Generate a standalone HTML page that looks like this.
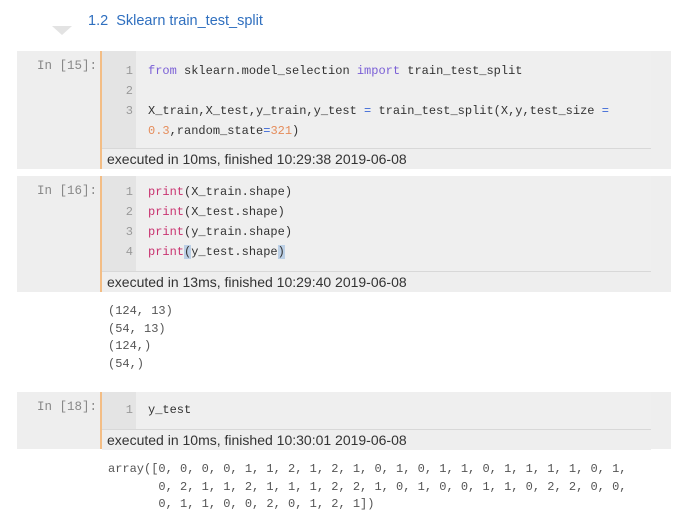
<!DOCTYPE html><html><head><style>
body{margin:0;width:687px;height:528px;background:#fff;position:relative;overflow:hidden;font-family:"Liberation Sans",sans-serif}
.a{position:absolute}
.cell{position:absolute;left:17px;width:654px;background:#eeeeee}
.pr{position:absolute;left:0;width:80px;text-align:right;font:12.5px "Liberation Mono",monospace;color:#888}
.ob{position:absolute;left:83px;width:2px;top:0;bottom:0;background:#f3bd85}
.gut{position:absolute;left:85px;width:34px;background:#e4e4e4;top:0}
.code{position:absolute;left:119px;right:20px;top:0;background:#efefef}
.ln{position:absolute;font:12px "Liberation Mono",monospace;color:#999;width:30px;text-align:right}
.cl{position:absolute;left:131px;font:12px "Liberation Mono",monospace;color:#333;white-space:pre}
.ex{position:absolute;left:85px;right:20px;border-top:1px solid #d8d8d8;height:20px;font-size:14px;color:#333;padding-left:5px;line-height:20px;background:#eeeeee}
.kw{color:#7a5fd6}.bi{color:#c93370}.nm{color:#e58c5a}.op{color:#3a66d6}
.out{position:absolute;left:108px;font:12px "Liberation Mono",monospace;color:#555;white-space:pre;line-height:17.5px}
</style></head><body>
<div class="a" style="left:52px;top:26px;width:0;height:0;border-left:10px solid transparent;border-right:10px solid transparent;border-top:9px solid #e3e3e3"></div>
<div class="a" style="left:88px;top:13px;font-size:14.5px;color:#2f6fbf">1.2&nbsp; Sklearn train_test_split</div>

<div class="cell" style="top:51px;height:118px">
<div class="pr" style="top:8px">In [15]:</div>
<div class="ob"></div>
<div class="gut" style="height:97px"></div><div class="code" style="height:97px"></div>
<div class="ln" style="left:86px;top:13px">1</div><div class="ln" style="left:86px;top:33px">2</div><div class="ln" style="left:86px;top:53px">3</div>
<div class="cl" style="top:13px"><span class="kw">from</span> sklearn.model_selection <span class="kw">import</span> train_test_split</div>
<div class="cl" style="top:53px">X_train,X_test,y_train,y_test <span class="op">=</span> train_test_split(X,y,test_size <span class="op">=</span></div>
<div class="cl" style="top:73px"><span class="nm">0.3</span>,random_state<span class="op">=</span><span class="nm">321</span>)</div>
<div class="ex" style="top:97px">executed in 10ms, finished 10:29:38 2019-06-08</div>
</div>

<div class="cell" style="top:176px;height:116px">
<div class="pr" style="top:8px">In [16]:</div>
<div class="ob"></div>
<div class="gut" style="height:95px"></div><div class="code" style="height:95px"></div>
<div class="ln" style="left:86px;top:9px">1</div><div class="ln" style="left:86px;top:29px">2</div><div class="ln" style="left:86px;top:49px">3</div><div class="ln" style="left:86px;top:69px">4</div>
<div class="cl" style="top:9px"><span class="bi">print</span>(X_train.shape)</div>
<div class="cl" style="top:29px"><span class="bi">print</span>(X_test.shape)</div>
<div class="cl" style="top:49px"><span class="bi">print</span>(y_train.shape)</div>
<div class="cl" style="top:69px"><span class="bi">print</span><span style="background:#bcd0e6">(</span>y_test.shape<span style="background:#bcd0e6">)</span></div>
<div class="ex" style="top:95px">executed in 13ms, finished 10:29:40 2019-06-08</div>
</div>
<div class="out" style="top:303px">(124, 13)
(54, 13)
(124,)
(54,)</div>

<div class="cell" style="top:392px;height:57px">
<div class="pr" style="top:8px">In [18]:</div>
<div class="ob"></div>
<div class="gut" style="height:37px"></div><div class="code" style="height:37px"></div>
<div class="ln" style="left:86px;top:11px">1</div>
<div class="cl" style="top:11px">y_test</div>
<div class="ex" style="top:37px">executed in 10ms, finished 10:30:01 2019-06-08</div>
</div>
<div class="out" style="top:461px">array([0, 0, 0, 0, 1, 1, 2, 1, 2, 1, 0, 1, 0, 1, 1, 0, 1, 1, 1, 1, 0, 1,
       0, 2, 1, 1, 2, 1, 1, 1, 2, 2, 1, 0, 1, 0, 0, 1, 1, 0, 2, 2, 0, 0,
       0, 1, 1, 0, 0, 2, 0, 1, 2, 1])</div>
</body></html>
